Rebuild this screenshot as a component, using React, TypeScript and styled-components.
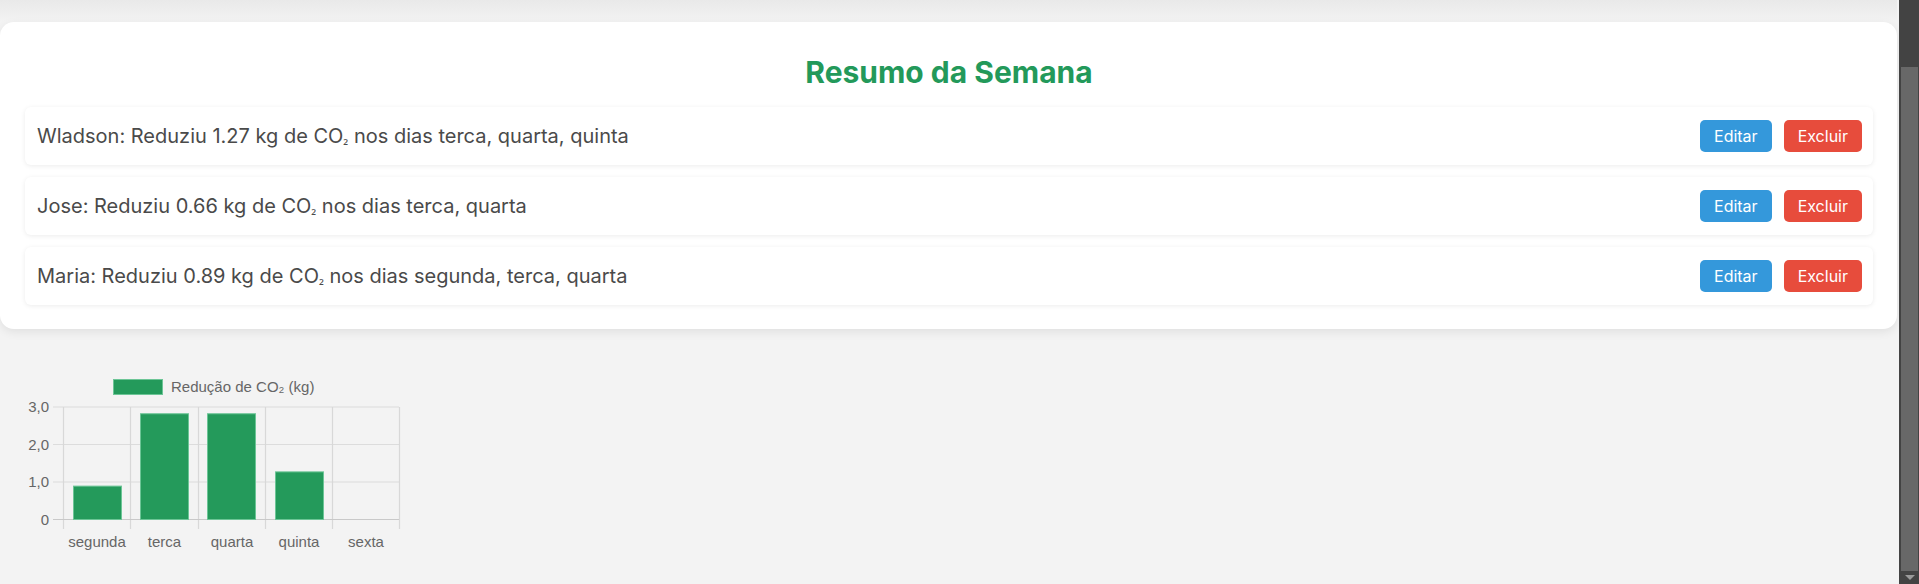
import React from "react";
import styled, { createGlobalStyle } from "styled-components";

const GlobalStyle = createGlobalStyle`
  html, body { margin: 0; padding: 0; background: #f3f3f3; overflow: hidden; }
  * { box-sizing: border-box; }
`;

const Page = styled.div`
  display: flex;
  width: 1919px;
  height: 584px;
  overflow: hidden;
`;

const Main = styled.main`
  flex: 1;
  display: flex;
  flex-direction: column;
  padding-right: 2px;
  background: #f3f3f3;
  font-family: Inter, "Noto Sans", sans-serif;
`;

const TopShade = styled.div`
  height: 22px;
  background: linear-gradient(#e9e9e9, #f3f3f3);
`;

const SummaryCard = styled.section`
  background: #fff;
  border-radius: 14px;
  padding: 24px 24px 24px 25px;
  box-shadow: 0 3px 10px rgba(0, 0, 0, 0.08);
`;

const Title = styled.h2`
  margin: 8px 0 17px;
  text-align: center;
  color: #23995a;
  font-size: 30px;
  font-weight: 700;
  line-height: normal;
`;

const List = styled.ul`
  list-style: none;
  margin: 0;
  padding: 0;
  display: flex;
  flex-direction: column;
  gap: 12px;
`;

const Row = styled.li`
  height: 58px;
  display: flex;
  align-items: center;
  justify-content: space-between;
  padding: 0 11px 0 12px;
  background: #fff;
  border-radius: 6px;
  box-shadow: 0 1px 5px rgba(0, 0, 0, 0.08);
`;

const RowText = styled.span`
  font-size: 20px;
  color: #4a4a4a;
`;

const Sub = styled.span`
  font-family: "Noto Sans", sans-serif;
  font-size: 14px;
`;

const Actions = styled.div`
  display: flex;
  gap: 12px;
`;

const ActionButton = styled.button<{ $tone: "edit" | "delete" }>`
  height: 32px;
  padding: 0 14px;
  border: none;
  border-radius: 5px;
  background: ${(p) => (p.$tone === "edit" ? "#3498db" : "#e74c3c")};
  color: #fff;
  font-family: Inter, "Noto Sans", sans-serif;
  font-size: 16px;
  cursor: pointer;
`;

const ChartWrap = styled.div`
  margin-top: 11px;
  height: 244px;
`;

const ScrollTrack = styled.div`
  width: 20px;
  background: #434343;
  display: flex;
  flex-direction: column;
  padding: 67px 1px 0 2px;
`;

const ScrollThumb = styled.div`
  height: 504px;
  background: #686868;
`;

const ScrollArrow = styled.div`
  flex: 1;
  display: flex;
  align-items: center;
  justify-content: center;
`;

const entries = [
  { name: "Wladson", kg: "1.27", days: "terca, quarta, quinta" },
  { name: "Jose", kg: "0.66", days: "terca, quarta" },
  { name: "Maria", kg: "0.89", days: "segunda, terca, quarta" },
];

const days = ["segunda", "terca", "quarta", "quinta", "sexta"];
const values = [0.89, 2.82, 2.82, 1.27, 0];

const Y0 = 179; // zero line (519 - 340)
const UNIT = 37.5;
const GRID_X = [63, 130, 198, 265, 332, 399];
const BAR_X = [73, 140, 207, 275, 342];
const GREEN = "#249a5b";

function WeeklyChart() {
  return (
    <svg width="420" height="244" viewBox="0 0 420 244" fontFamily="'Liberation Sans', Arial, sans-serif">
      <rect x="113.5" y="39.5" width="49" height="15" fill={GREEN} stroke="#6cc596" strokeWidth="1" />
      <text x="171" y="52" fontSize="15" fill="#666">Redução de CO₂ (kg)</text>
      {[3, 2, 1].map((v) => (
        <line key={v} x1="53" x2="399" y1={Y0 - v * UNIT + 0.5} y2={Y0 - v * UNIT + 0.5} stroke="#dcdcdc" strokeWidth="1.2" />
      ))}
      {GRID_X.map((x) => (
        <line key={x} x1={x + 0.5} x2={x + 0.5} y1="67" y2="189" stroke="#d8d8d8" strokeWidth="1.2" />
      ))}
      <line x1="53" x2="399" y1={Y0 + 0.5} y2={Y0 + 0.5} stroke="#c9c9c9" strokeWidth="1.2" />
      {["3,0", "2,0", "1,0", "0"].map((t, i) => (
        <text key={t} x="49" y={Y0 - (3 - i) * UNIT + 5.5} fontSize="15" fill="#666" textAnchor="end">{t}</text>
      ))}
      {values.map((v, i) =>
        v > 0 ? (
          <rect key={i} x={BAR_X[i] + 0.5} y={Y0 - v * UNIT + 0.5} width="48" height={v * UNIT} fill={GREEN} stroke="#6cc596" strokeWidth="1" />
        ) : null
      )}
      {days.map((d, i) => (
        <text key={d} x={(GRID_X[i] + GRID_X[i + 1]) / 2 + 0.5} y="207" fontSize="15" fill="#666" textAnchor="middle">{d}</text>
      ))}
    </svg>
  );
}

export default function App() {
  return (
    <Page>
      <GlobalStyle />
      <Main>
        <TopShade />
        <SummaryCard>
          <Title>Resumo da Semana</Title>
          <List>
            {entries.map((e) => (
              <Row key={e.name}>
                <RowText>
                  {e.name}: Reduziu {e.kg} kg de CO<Sub>₂</Sub> nos dias {e.days}
                </RowText>
                <Actions>
                  <ActionButton $tone="edit">Editar</ActionButton>
                  <ActionButton $tone="delete">Excluir</ActionButton>
                </Actions>
              </Row>
            ))}
          </List>
        </SummaryCard>
        <ChartWrap>
          <WeeklyChart />
        </ChartWrap>
      </Main>
      <ScrollTrack>
        <ScrollThumb />
        <ScrollArrow>
          <svg width="10" height="5" viewBox="0 0 10 5">
            <polygon points="0,0 10,0 5,5" fill="#9a9a9a" />
          </svg>
        </ScrollArrow>
      </ScrollTrack>
    </Page>
  );
}
